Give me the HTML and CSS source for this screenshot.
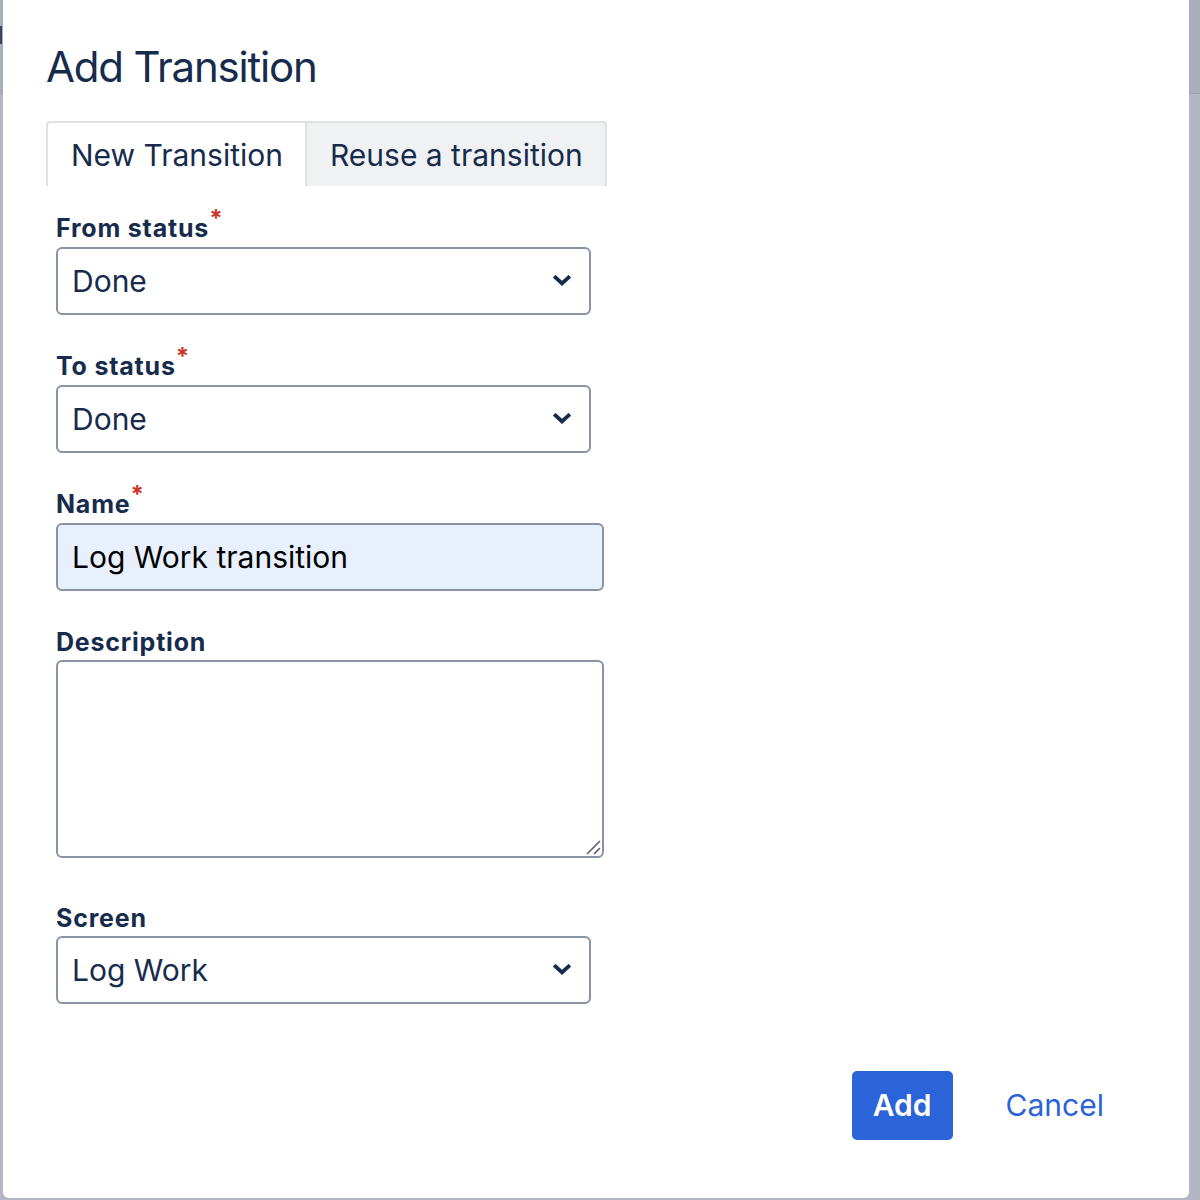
FILE: index.html
```html
<!DOCTYPE html>
<html lang="en">
<head>
<meta charset="utf-8">
<title>Add Transition</title>
<link rel="stylesheet" href="styles.css">
</head>
<body>
<div class="page">
  <div class="page-header"><span class="page-frag"></span></div>
  <div class="page-body"></div>
</div>
<div class="dialog">
  <h1 class="title">Add Transition</h1>
  <div class="tabs">
    <div class="tab tab-active">New Transition</div>
    <div class="tab">Reuse a transition</div>
  </div>
  <form class="form">
    <div class="field">
      <label class="label">From status<span class="req">*</span></label>
      <div class="select">
        <span class="select-value">Done</span>
        <svg class="chev" width="18" height="12" viewBox="0 0 18 12"><path d="M2.5 2.5 L9 8.5 L15.5 2.5" fill="none" stroke="#172b4d" stroke-width="3.8" stroke-linecap="square"/></svg>
      </div>
    </div>
    <div class="field">
      <label class="label">To status<span class="req">*</span></label>
      <div class="select">
        <span class="select-value">Done</span>
        <svg class="chev" width="18" height="12" viewBox="0 0 18 12"><path d="M2.5 2.5 L9 8.5 L15.5 2.5" fill="none" stroke="#172b4d" stroke-width="3.8" stroke-linecap="square"/></svg>
      </div>
    </div>
    <div class="field">
      <label class="label">Name<span class="req">*</span></label>
      <div class="input input-filled">Log Work transition</div>
    </div>
    <div class="field field-desc">
      <label class="label">Description</label>
      <div class="textarea-wrap">
        <textarea class="textarea"></textarea>
        <svg class="grip" width="18" height="18" viewBox="0 0 18 18"><path d="M3 16 L16 3 M10 16 L16 10" fill="none" stroke="#5e6472" stroke-width="1.7"/></svg>
      </div>
    </div>
    <div class="field field-screen">
      <label class="label">Screen</label>
      <div class="select">
        <span class="select-value">Log Work</span>
        <svg class="chev" width="18" height="12" viewBox="0 0 18 12"><path d="M2.5 2.5 L9 8.5 L15.5 2.5" fill="none" stroke="#172b4d" stroke-width="3.8" stroke-linecap="square"/></svg>
      </div>
    </div>
  </form>
  <div class="actions">
    <button class="btn btn-primary" type="button">Add</button>
    <button class="btn btn-link" type="button">Cancel</button>
  </div>
</div>
</body>
</html>
```

FILE: styles.css
```css
html, body {
  margin: 0;
  padding: 0;
}
body {
  width: 1200px;
  height: 1200px;
  overflow: hidden;
  position: relative;
  font-family: Inter, "Noto Sans", sans-serif;
  background: #b4b7c3;
}
.page {
  display: flex;
  flex-direction: column;
  height: 1200px;
}
.page-header {
  height: 93px;
  background: #aaadba;
  border-bottom: 1px solid #9da1ae;
  position: relative;
}
.page-frag {
  display: block;
  width: 2px;
  height: 18px;
  margin-top: 26px;
  background: #3a4560;
}
.page-body {
  flex: 1;
  background: #b4b7c3;
}
.dialog {
  position: absolute;
  left: 3px;
  top: -6px;
  width: 1186px;
  height: 1204px;
  background: #ffffff;
  border-radius: 6px;
  box-sizing: border-box;
  padding: 47px 0 0 43px;
  color: #172b4d;
}
.title {
  margin: 0;
  font-size: 42px;
  line-height: 52px;
  font-weight: 400;
  letter-spacing: -1.2px;
  color: #172b4d;
}
.tabs {
  display: flex;
  margin-top: 28px;
  width: max-content;
}
.tab {
  height: 65px;
  box-sizing: border-box;
  padding: 1px 22px 0 23px;
  line-height: 62px;
  font-size: 30px;
  color: #172b4d;
  background: #f0f1f3;
  border: 2px solid #dfe1e6;
  border-bottom: none;
  border-left: none;
  border-radius: 0 4px 0 0;
}
.tab-active {
  background: #ffffff;
  border-left: 2px solid #dfe1e6;
  border-radius: 4px 0 0 0;
}
.form {
  padding-left: 10px;
  margin-top: 27px;
  display: flex;
  flex-direction: column;
}
.field {
  display: flex;
  flex-direction: column;
  margin-bottom: 36px;
}
.field-desc {
  margin-bottom: 45px;
}
.field-screen {
  margin-bottom: 0;
}
.label {
  font-size: 25px;
  font-weight: 700;
  line-height: 30px;
  margin-bottom: 3px;
  color: #172b4d;
  letter-spacing: 0.8px;
}
.req {
  color: #c9372c;
  font-size: 24px;
  position: relative;
  top: -10px;
  margin-left: 0;
  font-weight: 700;
}
.select {
  width: 535px;
  height: 68px;
  box-sizing: border-box;
  border: 2px solid #8993a4;
  border-radius: 6px;
  display: flex;
  align-items: center;
  justify-content: space-between;
  padding: 0 18px 0 14px;
  font-size: 30px;
  color: #172b4d;
}
.chev {
  display: block;
}
.input {
  width: 548px;
  height: 68px;
  box-sizing: border-box;
  border: 2px solid #8993a4;
  border-radius: 6px;
  display: flex;
  align-items: center;
  padding: 0 14px;
  font-size: 30px;
  color: #000000;
}
.input-filled {
  background: #e8f0fe;
}
.textarea-wrap {
  position: relative;
  width: 548px;
  height: 198px;
}
.textarea {
  display: block;
  width: 548px;
  height: 198px;
  box-sizing: border-box;
  border: 2px solid #8993a4;
  border-radius: 6px;
  margin: 0;
  font-family: inherit;
  font-size: 30px;
  background: #ffffff;
  resize: none;
}
.grip {
  position: absolute;
  right: 2px;
  bottom: 2px;
  pointer-events: none;
}
.actions {
  display: flex;
  justify-content: flex-end;
  align-items: center;
  gap: 30px;
  margin-top: 67px;
  padding-right: 62px;
}
.btn {
  font-family: inherit;
  font-size: 30px;
  height: 69px;
  border: none;
  border-radius: 5px;
  padding: 0 23px;
  cursor: pointer;
  line-height: 69px;
}
.btn-primary {
  background: #2b63d9;
  color: #ffffff;
  font-weight: 600;
  width: 101px;
  padding: 0;
}
.btn-link {
  background: transparent;
  color: #2b63d9;
  font-weight: 400;
}
```
